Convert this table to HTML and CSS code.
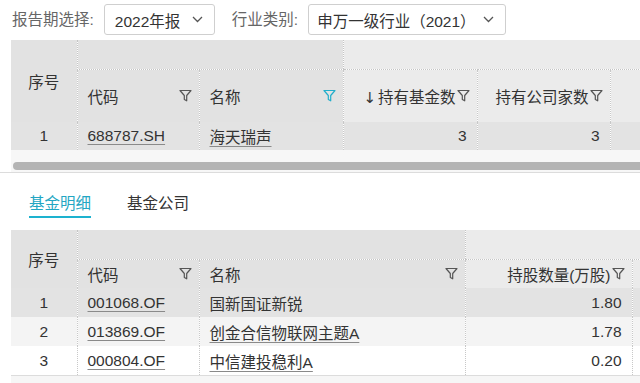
FILE: index.html
```html
<!DOCTYPE html>
<html lang="zh-CN">
<head>
<meta charset="utf-8">
<title>持仓</title>
<link rel="stylesheet" href="styles.css">
</head>
<body>
<div class="toolbar">
  <span class="label">报告期选择:</span>
  <div class="select s1"><span>2022年报</span><svg class="chev" width="11" height="7" viewBox="0 0 11 7"><polyline points="1,1 5.5,5.5 10,1"/></svg></div>
  <span class="label l2">行业类别:</span>
  <div class="select s2"><span>申万一级行业（2021）</span><svg class="chev" width="11" height="7" viewBox="0 0 11 7"><polyline points="1,1 5.5,5.5 10,1"/></svg></div>
</div>

<div class="top-block">
  <div class="grid">
    <table class="t1">
      <colgroup><col class="c-seq"><col class="c-code"><col class="c-name1"><col class="c-n1"><col class="c-n2"><col class="c-rest"></colgroup>
      <thead>
        <tr class="hr1">
          <th rowspan="2" class="fz center">序号</th>
          <th colspan="2" class="fz grp"></th>
          <th colspan="3" class="sc grp"></th>
        </tr>
        <tr class="hr2">
          <th class="fz vl"><div class="hc"><span>代码</span><svg class="flt" width="13" height="13" viewBox="0 0 13 13"><path d="M1 1.5h11l-4.3 5v5.3l-2.4-1.3v-4z"/></svg></div></th>
          <th class="fz vl"><div class="hc"><span>名称</span><svg class="flt on" width="13" height="13" viewBox="0 0 13 13"><path d="M1 1.5h11l-4.3 5v5.3l-2.4-1.3v-4z"/></svg></div></th>
          <th class="sc vl"><div class="hc right"><span><span class="arr">↓</span>持有基金数</span><svg class="flt" width="13" height="13" viewBox="0 0 13 13"><path d="M1 1.5h11l-4.3 5v5.3l-2.4-1.3v-4z"/></svg></div></th>
          <th class="sc vl"><div class="hc right"><span>持有公司家数</span><svg class="flt" width="13" height="13" viewBox="0 0 13 13"><path d="M1 1.5h11l-4.3 5v5.3l-2.4-1.3v-4z"/></svg></div></th>
          <th class="sc vl"></th>
        </tr>
      </thead>
      <tbody>
        <tr class="row hl">
          <td class="center">1</td>
          <td class="vl"><a class="lnk">688787.SH</a></td>
          <td class="vl"><a class="lnk">海天瑞声</a></td>
          <td class="vl num">3</td>
          <td class="vl num">3</td>
          <td class="vl"></td>
        </tr>
      </tbody>
    </table>
  </div>
  <div class="hscroll"><div class="thumb"></div></div>
</div>

<div class="tabs">
  <span class="tab active">基金明细</span>
  <span class="tab">基金公司</span>
</div>

<div class="grid">
  <table class="t2">
    <colgroup><col class="c-seq"><col class="c-code"><col class="c-name2"><col class="c-qty"><col class="c-rest"></colgroup>
    <thead>
      <tr class="hr1b">
        <th rowspan="2" class="fz center">序号</th>
        <th colspan="2" class="fz grp"></th>
        <th colspan="2" class="sc grp"></th>
      </tr>
      <tr class="hr2b">
        <th class="fz vl"><div class="hc"><span>代码</span><svg class="flt" width="13" height="13" viewBox="0 0 13 13"><path d="M1 1.5h11l-4.3 5v5.3l-2.4-1.3v-4z"/></svg></div></th>
        <th class="fz vl"><div class="hc"><span>名称</span><svg class="flt" width="13" height="13" viewBox="0 0 13 13"><path d="M1 1.5h11l-4.3 5v5.3l-2.4-1.3v-4z"/></svg></div></th>
        <th class="sc vl"><div class="hc right"><span>持股数量(万股)</span><svg class="flt" width="13" height="13" viewBox="0 0 13 13"><path d="M1 1.5h11l-4.3 5v5.3l-2.4-1.3v-4z"/></svg></div></th>
        <th class="sc vl"></th>
      </tr>
    </thead>
    <tbody>
      <tr class="row hl">
        <td class="center">1</td>
        <td class="vl"><a class="lnk">001068.OF</a></td>
        <td class="vl">国新国证新锐</td>
        <td class="vl num">1.80</td>
        <td class="vl"></td>
      </tr>
      <tr class="row stripe">
        <td class="center">2</td>
        <td class="vl"><a class="lnk">013869.OF</a></td>
        <td class="vl"><a class="lnk">创金合信物联网主题A</a></td>
        <td class="vl num">1.78</td>
        <td class="vl"></td>
      </tr>
      <tr class="row">
        <td class="center">3</td>
        <td class="vl"><a class="lnk">000804.OF</a></td>
        <td class="vl"><a class="lnk">中信建投稳利A</a></td>
        <td class="vl num">0.20</td>
        <td class="vl"></td>
      </tr>
    </tbody>
  </table>
  <div class="foot"></div>
</div>
</body>
</html>
```
FILE: styles.css
```css
html, body {
  margin: 0;
  padding: 0;
  background: #fff;
}
body {
  font-family: "Liberation Sans", "Noto Sans CJK SC", sans-serif;
  font-size: 15.5px;
  color: #333;
  overflow: hidden;
}

/* toolbar */
.toolbar {
  height: 40px;
  box-sizing: border-box;
  padding: 4px 0 0 12px;
  display: flex;
  align-items: flex-start;
}
.label {
  color: #666;
  line-height: 31px;
  margin-right: 10px;
}
.l2 { margin-left: 17px; }
.select {
  height: 31px;
  box-sizing: border-box;
  border: 1px solid #cfcfcf;
  border-radius: 3px;
  display: flex;
  align-items: center;
  justify-content: space-between;
  padding: 0 11px 0 10px;
  color: #333;
}
.s1 { width: 111px; }
.s2 { width: 198px; padding-left: 8px; }
.chev polyline {
  fill: none;
  stroke: #555;
  stroke-width: 1.3;
}

/* tables */
.grid {
  margin-left: 11px;
  overflow: hidden;
}
table {
  border-collapse: collapse;
  table-layout: fixed;
}
.t1 { width: 700px; }
.t2 { width: 722px; }
.c-seq { width: 66px; }
.c-code { width: 122px; }
.c-name1 { width: 144px; }
.c-n1 { width: 134px; }
.c-n2 { width: 133px; }
.c-name2 { width: 266px; }
.c-qty { width: 167px; }
.c-rest { width: 101px; }

th, td {
  padding: 0 10px 0 10px;
  white-space: nowrap;
  overflow: hidden;
  font-weight: normal;
  text-align: left;
  vertical-align: middle;
  color: #333;
}
th.fz { background: #e2e2e2; }
th.sc { background: #ebebeb; }
th.grp { border-bottom: 1px dotted #c4c4c4; border-left: 1px dotted #c4c4c4; }
.vl { border-left: 1px dotted #c8c8c8; }
.center { text-align: center; padding: 0; }
.num { text-align: right; }

.hr1 { height: 29px; }
.hr2 { height: 53px; }
.hr1b { height: 29px; }
.hr2b { height: 29px; }
.row { height: 29px; }
.t1 .row { height: 28px; }
.row.hl td { background: #e3e3e3; }
.row.stripe td { background: #f4f4f4; }

.hc {
  display: flex;
  align-items: center;
  justify-content: space-between;
}
.hc.right { justify-content: flex-end; gap: 1px; }
th .hc { margin-right: -3px; }
.arr {
  margin-right: 2px;
  font-family: "DejaVu Sans", sans-serif;
  font-size: 15px;
}
.flt path {
  fill: none;
  stroke: #555;
  stroke-width: 1.2;
  stroke-linejoin: round;
}
.flt.on path { stroke: #22aecb; }

.lnk {
  color: #333;
  text-decoration: underline;
  text-decoration-color: #8a8a8a;
  text-underline-offset: 3px;
}

/* horizontal scroll */
.top-block {
  border-bottom: 1px solid #dcdcdc;
}
.hscroll {
  margin-left: 11px;
  height: 22px;
  background: #f7f7f7;
  padding: 12px 0 0 2px;
  box-sizing: border-box;
}
.thumb {
  height: 8px;
  border-radius: 4px 0 0 4px;
  background: #b4b4b4;
}

/* tabs */
.tabs {
  display: flex;
  gap: 36px;
  padding-left: 29px;
  margin-bottom: 12px;
}
.tab {
  padding-top: 21px;
  line-height: 20px;
  padding-bottom: 2px;
  border-bottom: 2px solid transparent;
  color: #333;
}
.tab.active {
  color: #23a6c3;
  border-bottom-color: #1db2cf;
}

.foot {
  height: 8px;
  border-top: 1px solid #dcdcdc;
  background: #f6f6f6;
}
```
